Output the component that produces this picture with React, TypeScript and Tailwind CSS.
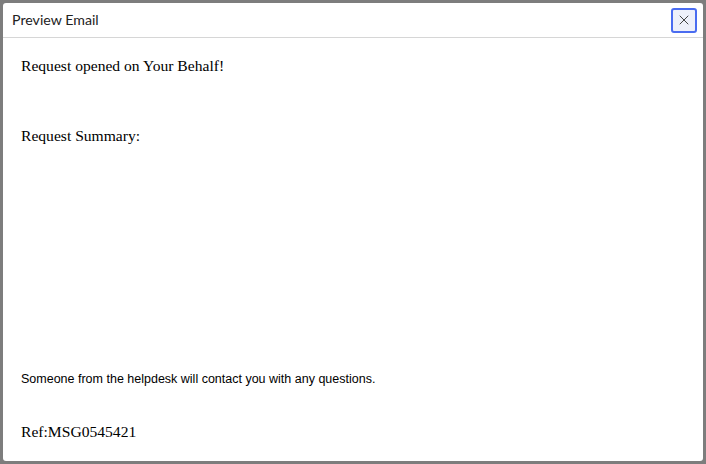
import React from "react";

const X = () => (
  <svg width="12" height="12" viewBox="0 0 12 12" fill="none" stroke="#444" strokeWidth="1" strokeLinecap="round">
    <path d="M2 2 L10 10 M10 2 L2 10" />
  </svg>
);

export default function App() {
  return (
    <div className="w-[706px] h-[464px] bg-[#7d7d7d] p-[3px]">
      <div className="flex h-full flex-col overflow-hidden rounded-[3px] bg-white">
        {/* Header */}
        <div className="flex h-[35px] shrink-0 items-center justify-between border-b border-[#d6d6d6] pl-[9px] pr-[6px]">
          <h1 className="text-[14.2px] text-[#222] font-['Lato',sans-serif]">Preview Email</h1>
          <button
            aria-label="Close"
            className="flex h-[25px] w-[26px] items-center justify-center rounded-[3px] border-2 border-[#4a6cf0] bg-[#eef0fa]"
          >
            <X />
          </button>
        </div>

        {/* Body */}
        <div className="flex flex-1 flex-col px-[18px] font-['Liberation_Serif',serif] text-[15.6px] text-black">
          <p className="mt-[18px] leading-[20px]">Request opened on Your Behalf!</p>
          <p className="mt-[50px] leading-[20px]">Request Summary:</p>
          <p className="mt-auto font-['Liberation_Sans',sans-serif] text-[12.5px] leading-[16px]">
            Someone from the helpdesk will contact you with any questions.
          </p>
          <p className="mb-[19px] mt-[35px] leading-[20px]">Ref:MSG0545421</p>
        </div>
      </div>
    </div>
  );
}
